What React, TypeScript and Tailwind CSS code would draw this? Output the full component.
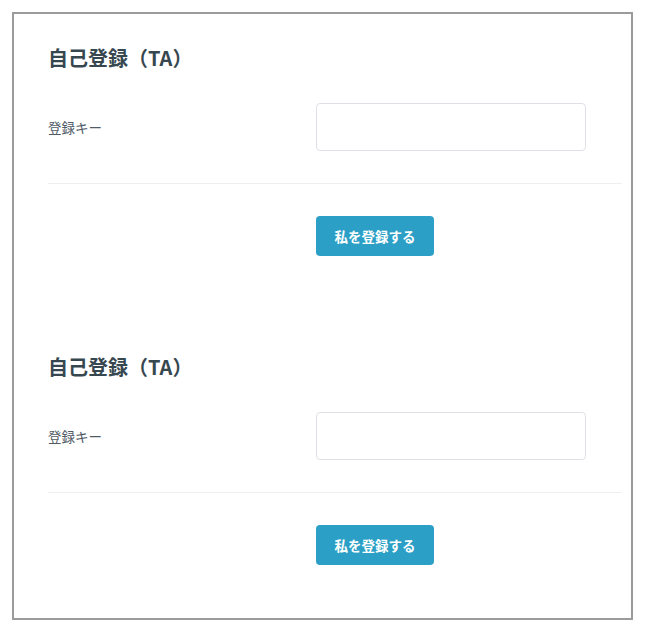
const font = { fontFamily: '"Noto Sans CJK JP", "Noto Sans", sans-serif' };

function RegisterSection() {
  return (
    <section>
      <h2 className="text-[20px] font-bold leading-[27px] text-[#37474f]">自己登録（TA）</h2>
      <div className="mt-8 grid grid-cols-[268px_270px] items-center">
        <label className="text-[13.5px] text-[#4f5b66]">登録キー</label>
        <input
          type="text"
          className="h-[48px] w-[270px] rounded border border-[#dde1e6] bg-white px-3 text-sm outline-none"
        />
      </div>
      <div className="mt-8 border-t border-[#eeeff1]" />
      <div className="mt-8 pl-[268px]">
        <button
          type="button"
          className="h-[40px] w-[118px] rounded bg-[#2b9fc6] text-[13.5px] font-bold text-white"
        >
          私を登録する
        </button>
      </div>
    </section>
  );
}

export default function App() {
  return (
    <div className="min-h-screen bg-white pl-3 pt-3" style={font}>
      <div className="h-[608px] w-[621px] border-2 border-[#9b9b9b] bg-white pl-[34px] pr-[9px] pt-[30px]">
        <div className="flex flex-col gap-[97px]">
          <RegisterSection />
          <RegisterSection />
        </div>
      </div>
    </div>
  );
}
